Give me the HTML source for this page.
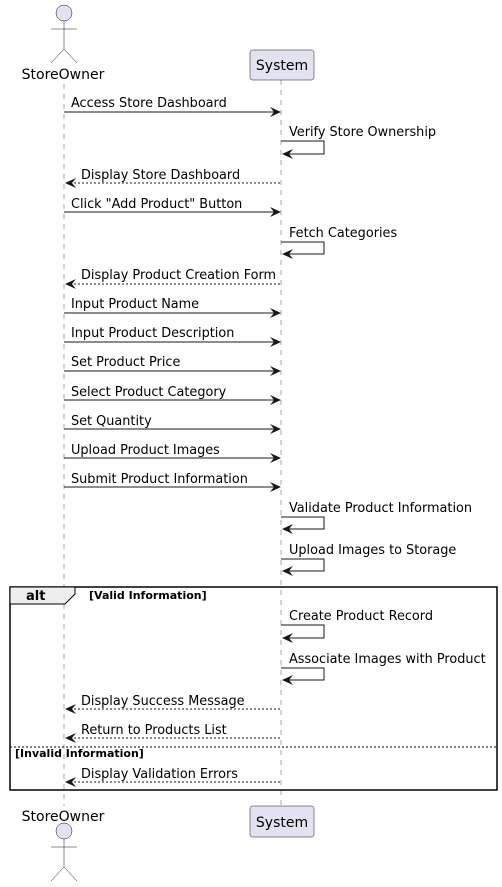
<!DOCTYPE html>
<html><head><meta charset="utf-8"><style>
html,body{margin:0;padding:0;background:#fff}
svg{display:block}
text{font-family:"DejaVu Sans","Liberation Sans",sans-serif;fill:#000}
</style></head><body>
<svg width="502" height="887" viewBox="0 0 502 887" xmlns="http://www.w3.org/2000/svg">
<defs>
<polygon id="ar" points="-11,-5 0,0 -11,5 -7,0" fill="#181818"/>
<polygon id="al" points="11,-5 0,0 11,5 7,0" fill="#181818"/>
</defs>
<!-- lifelines -->
<line x1="64" y1="84" x2="64" y2="806" stroke="#555" stroke-width="0.5" stroke-dasharray="5,5"/>
<line x1="281" y1="80" x2="281" y2="806" stroke="#555" stroke-width="0.5" stroke-dasharray="5,5"/>
<!-- top actor -->
<circle cx="64" cy="13" r="8" fill="#E2E2F0" stroke="#181818" stroke-width="0.5"/>
<g stroke="#181818" stroke-width="0.5" fill="none">
<path d="M64 21 V49 M51 29 H77 M51 63 L64 49 L77 63"/>
</g>
<text x="63" y="79" font-size="14" text-anchor="middle">StoreOwner</text>
<rect x="250" y="50" width="64" height="30" rx="2.5" fill="#E2E2F0" stroke="#181818" stroke-width="0.5"/>
<text x="282" y="70" font-size="14" text-anchor="middle">System</text>
<!-- bottom -->
<text x="63" y="821" font-size="14" text-anchor="middle">StoreOwner</text>
<circle cx="64" cy="831" r="8" fill="#E2E2F0" stroke="#181818" stroke-width="0.5"/>
<g stroke="#181818" stroke-width="0.5" fill="none">
<path d="M64 839 V867 M51 847 H77 M51 881 L64 867 L77 881"/>
</g>
<rect x="250" y="806" width="64" height="31" rx="2.5" fill="#E2E2F0" stroke="#181818" stroke-width="0.5"/>
<text x="282" y="827" font-size="14" text-anchor="middle">System</text>

<g font-size="12.85">
<g stroke="#181818" stroke-width="1" fill="none">
<line x1="64" y1="112" x2="279" y2="112"/>
<path d="M281 141 H324 V154 H283"/>
<line x1="66" y1="183" x2="281" y2="183" stroke-dasharray="2,2"/>
<line x1="64" y1="212" x2="279" y2="212"/>
<path d="M281 242 H324 V254 H283"/>
<line x1="66" y1="284" x2="281" y2="284" stroke-dasharray="2,2"/>
<line x1="64" y1="313" x2="279" y2="313"/>
<line x1="64" y1="342" x2="279" y2="342"/>
<line x1="64" y1="371" x2="279" y2="371"/>
<line x1="64" y1="400" x2="279" y2="400"/>
<line x1="64" y1="429" x2="279" y2="429"/>
<line x1="64" y1="458" x2="279" y2="458"/>
<line x1="64" y1="487" x2="279" y2="487"/>
<path d="M281 517 H324 V529 H283"/>
<path d="M281 559 H324 V571 H283"/>
<path d="M281 625 H324 V638 H283"/>
<path d="M281 668 H324 V680 H283"/>
<line x1="66" y1="709" x2="281" y2="709" stroke-dasharray="2,2"/>
<line x1="66" y1="738" x2="281" y2="738" stroke-dasharray="2,2"/>
<line x1="66" y1="782" x2="281" y2="782" stroke-dasharray="2,2"/>
</g>
<use href="#ar" x="281" y="112"/><use href="#al" x="282" y="154"/><use href="#al" x="65" y="183"/>
<use href="#ar" x="281" y="212"/><use href="#al" x="282" y="254"/><use href="#al" x="65" y="284"/>
<use href="#ar" x="281" y="313"/><use href="#ar" x="281" y="342"/><use href="#ar" x="281" y="371"/>
<use href="#ar" x="281" y="400"/><use href="#ar" x="281" y="429"/><use href="#ar" x="281" y="458"/>
<use href="#ar" x="281" y="487"/><use href="#al" x="282" y="529"/><use href="#al" x="282" y="571"/>
<use href="#al" x="282" y="638"/><use href="#al" x="282" y="680"/>
<use href="#al" x="65" y="709"/><use href="#al" x="65" y="738"/><use href="#al" x="65" y="782"/>

<text x="71" y="107">Access Store Dashboard</text>
<text x="289" y="136">Verify Store Ownership</text>
<text x="81" y="179">Display Store Dashboard</text>
<text x="71" y="208">Click "Add Product" Button</text>
<text x="289" y="237">Fetch Categories</text>
<text x="81" y="279">Display Product Creation Form</text>
<text x="71" y="308">Input Product Name</text>
<text x="71" y="337">Input Product Description</text>
<text x="71" y="366">Set Product Price</text>
<text x="71" y="396">Select Product Category</text>
<text x="71" y="425">Set Quantity</text>
<text x="71" y="454">Upload Product Images</text>
<text x="71" y="483">Submit Product Information</text>
<text x="289" y="512">Validate Product Information</text>
<text x="289" y="554">Upload Images to Storage</text>
<text x="289" y="620">Create Product Record</text>
<text x="289" y="663">Associate Images with Product</text>
<text x="81" y="705">Display Success Message</text>
<text x="81" y="734">Return to Products List</text>
<text x="81" y="778">Display Validation Errors</text>
</g>
<!-- alt -->
<rect x="10" y="587" width="487" height="203" fill="none" stroke="#000" stroke-width="1.5"/>
<polygon points="10,587 75,587 75,594 65,604 10,604" fill="#EEEEEE" stroke="#000" stroke-width="1"/>
<text x="26" y="600" font-size="13" font-weight="bold">alt</text>
<text x="89" y="599" font-size="11" font-weight="bold">[Valid Information]</text>
<line x1="10" y1="747" x2="497" y2="747" stroke="#000" stroke-width="1" stroke-dasharray="2,2"/>
<text x="15" y="757" font-size="11" font-weight="bold">[Invalid Information]</text>
</svg>
</body></html>
